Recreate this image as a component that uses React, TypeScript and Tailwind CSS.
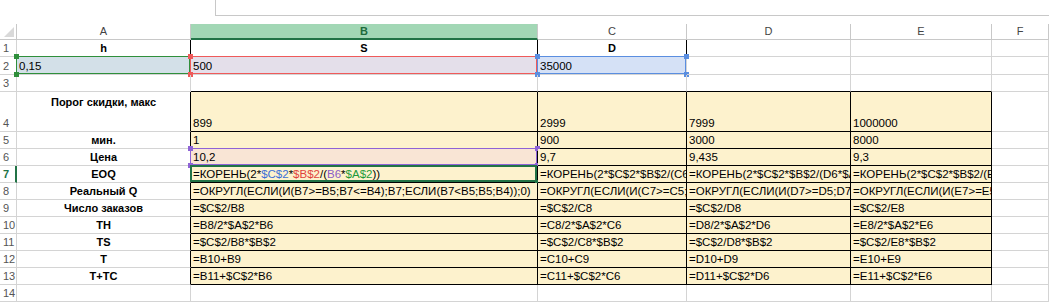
import React from "react";

const cols = ["A", "B", "C", "D", "E", "F"];

type Row = { n: number; label: string; vals: React.ReactNode[] };

const eoq = (c: string) => `=КОРЕНЬ(2*$C$2*$B$2/(${c}6*$A$2))`;
const realQ = (c: string) =>
  `=ОКРУГЛ(ЕСЛИ(И(${c}7>=${c}5;${c}7<=${c}4);${c}7;ЕСЛИ(${c}7<${c}5;${c}5;${c}4));0)`;

const b7 = (
  <span>
    =КОРЕНЬ(2*<span className="text-[#3c6fd6]">$C$2</span>*
    <span className="text-[#e0443c]">$B$2</span>/(
    <span className="text-[#8a5cc8]">B6</span>*
    <span className="text-[#1f9a3a]">$A$2</span>))
  </span>
);

const rows: Row[] = [
  { n: 5, label: "мин.", vals: ["1", "900", "3000", "8000"] },
  { n: 6, label: "Цена", vals: ["10,2", "9,7", "9,435", "9,3"] },
  { n: 7, label: "EOQ", vals: [b7, eoq("C"), eoq("D"), eoq("E")] },
  { n: 8, label: "Реальный Q", vals: [realQ("B"), realQ("C"), realQ("D"), realQ("E")] },
  { n: 9, label: "Число заказов", vals: ["B", "C", "D", "E"].map((c) => `=$C$2/${c}8`) },
  { n: 10, label: "TH", vals: ["B", "C", "D", "E"].map((c) => `=${c}8/2*$A$2*${c}6`) },
  { n: 11, label: "TS", vals: ["B", "C", "D", "E"].map((c) => `=$C$2/${c}8*$B$2`) },
  { n: 12, label: "T", vals: ["B", "C", "D", "E"].map((c) => `=${c}10+${c}9`) },
  { n: 13, label: "T+TC", vals: ["B", "C", "D", "E"].map((c) => `=${c}11+$C$2*${c}6`) },
];

function RowNum({ n, active }: { n: number; active?: boolean }) {
  return (
    <div
      className={
        "flex items-end border-b border-r border-[#d4d4d4] pl-[3px] pb-[1px] text-[11px] leading-[13px] " +
        (active ? "border-r-2 border-r-[#217346] font-bold text-[#217346]" : "text-[#555]")
      }
    >
      {n}
    </div>
  );
}

function Cell({
  children,
  className = "",
}: {
  children?: React.ReactNode;
  className?: string;
}) {
  return (
    <div
      className={
        "relative flex items-end overflow-hidden whitespace-nowrap border-b border-r border-[#d4d4d4] px-[2px] pb-px text-[11.5px] leading-[14px] text-black " +
        className
      }
    >
      {children}
    </div>
  );
}

function Handles({ color }: { color: string }) {
  return (
    <>
      <span className={`absolute -left-[3px] -top-[3px] h-[5px] w-[5px] ${color}`} />
      <span className={`absolute -right-[3px] -top-[3px] h-[5px] w-[5px] ${color}`} />
      <span className={`absolute -bottom-[3px] -left-[3px] h-[5px] w-[5px] ${color}`} />
      <span className={`absolute -bottom-[3px] -right-[3px] h-[5px] w-[5px] ${color}`} />
    </>
  );
}

const label = "justify-center border-r-black text-[11px] font-bold";

export default function App() {
  return (
    <div className="h-[303px] w-[1049px] overflow-hidden bg-white font-['Liberation_Sans',Arial,sans-serif]">
      <div className="h-[24px]">
        <div className="ml-[215px] h-[16px] border-b border-l border-[#c8c8c8]" />
      </div>

      <div className="grid grid-cols-[17px_174px_347px_149px_164px_141px_1fr] grid-rows-[16px_17px_18px_17px_40px_repeat(10,17px)]">
        {/* column headers */}
        <div className="relative border-b border-r border-[#c8c8c8]">
          <span className="absolute bottom-[2px] right-[2px] h-0 w-0 border-b-[10px] border-l-[10px] border-b-[#d9d9d9] border-l-transparent" />
        </div>
        {cols.map((c) =>
          c === "B" ? (
            <div
              key={c}
              className="flex items-center justify-center border-b-2 border-r border-b-[#217346] border-r-[#c8c8c8] bg-[#a2d7b5] text-[11px] font-bold text-[#1e6b3c]"
            >
              {c}
            </div>
          ) : (
            <div
              key={c}
              className="flex items-center justify-center border-b border-r border-[#c8c8c8] text-[11px] text-[#444]"
            >
              {c}
            </div>
          )
        )}

        {/* row 1 */}
        <RowNum n={1} />
        <Cell className={label}>h</Cell>
        <Cell className={label}>S</Cell>
        <Cell className={label}>D</Cell>
        <Cell />
        <Cell />
        <Cell />

        {/* row 2 */}
        <RowNum n={2} />
        <Cell className="overflow-visible bg-[#d3e0e8]">
          <span className="pointer-events-none absolute -left-px -top-px bottom-0 right-0 border-[1.5px] border-[#2f8f3b]" />
          <Handles color="bg-[#2f8f3b]" />
          0,15
        </Cell>
        <Cell className="overflow-visible bg-[#e4dfea]">
          <span className="pointer-events-none absolute -left-px -top-px bottom-0 right-0 border-[1.5px] border-[#ef5a5a]" />
          <Handles color="bg-[#ef5a5a]" />
          500
        </Cell>
        <Cell className="overflow-visible bg-[#d5e1f6]">
          <span className="pointer-events-none absolute -left-px -top-px bottom-0 right-0 border-[1.5px] border-[#5a8ee0]" />
          <Handles color="bg-[#5a8ee0]" />
          35000
        </Cell>
        <Cell />
        <Cell />
        <Cell />

        {/* row 3 */}
        <RowNum n={3} />
        <Cell />
        <Cell className="border-b-black" />
        <Cell className="border-b-black" />
        <Cell className="border-b-black" />
        <Cell className="border-b-black" />
        <Cell />

        {/* row 4 */}
        <RowNum n={4} />
        <Cell className={label + " items-start pt-[3px]"}>Порог скидки, макс</Cell>
        {["899", "2999", "7999", "1000000"].map((v) => (
          <Cell key={v} className="border-b-black border-r-black bg-[#fdf2cd]">
            {v}
          </Cell>
        ))}
        <Cell />

        {rows.map((r) => (
          <React.Fragment key={r.n}>
            <RowNum n={r.n} active={r.n === 7} />
            <Cell className={label}>{r.label}</Cell>
            {r.vals.map((v, i) => {
              const b6 = r.n === 6 && i === 0;
              const b7Cell = r.n === 7 && i === 0;
              return (
                <Cell
                  key={i}
                  className={
                    "border-b-black border-r-black " +
                    (b6 ? "overflow-visible bg-[#f9e5d5]" : "bg-[#fdf2cd]") +
                    (b7Cell ? " overflow-visible" : "")
                  }
                >
                  {b6 && (
                    <>
                      <span className="pointer-events-none absolute -left-px -top-px bottom-0 right-0 border-[1.5px] border-[#8e63d6]" />
                      <Handles color="bg-[#8e63d6]" />
                    </>
                  )}
                  {b7Cell && (
                    <>
                      <span className="pointer-events-none absolute -left-px -top-px bottom-0 right-0 border-2 border-[#217346]" />
                      <span className="absolute -bottom-[3px] -right-[3px] h-[5px] w-[5px] bg-[#217346]" />
                    </>
                  )}
                  {v}
                </Cell>
              );
            })}
            <Cell />
          </React.Fragment>
        ))}

        {/* row 14 */}
        <RowNum n={14} />
        <Cell />
        <Cell />
        <Cell />
        <Cell />
        <Cell />
        <Cell />
      </div>
    </div>
  );
}
